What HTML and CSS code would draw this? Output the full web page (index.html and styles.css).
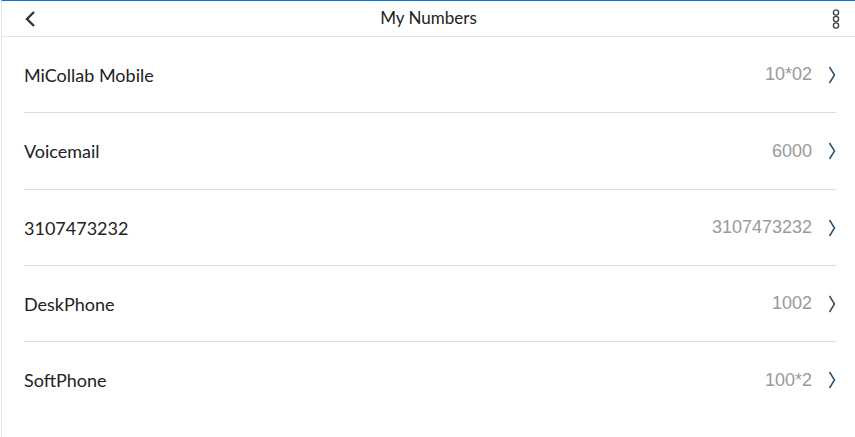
FILE: index.html
```html
<!DOCTYPE html>
<html>
<head>
    <meta charset="UTF-8">
    <title>My Numbers</title>
    <link rel="stylesheet" href="styles.css">
</head>
<body>
    <div class="page">
        <div class="header">
            <svg class="back" width="12" height="16" viewBox="0 0 12 16"><path d="M10 1 L3 8 L10 15" fill="none" stroke="#333" stroke-width="2.4"/></svg>
            <div class="title">My Numbers</div>
            <svg class="more" width="10" height="20" viewBox="0 0 10 20"><circle cx="5" cy="3.5" r="2.6" fill="none" stroke="#444" stroke-width="1.4"/><circle cx="5" cy="10" r="2.6" fill="none" stroke="#444" stroke-width="1.4"/><circle cx="5" cy="16.5" r="2.6" fill="none" stroke="#444" stroke-width="1.4"/></svg>
        </div>
        <ul class="list">
            <li class="row"><span class="label">MiCollab Mobile</span><span class="value">10*02</span><svg class="chev" width="8" height="18" viewBox="0 0 8 18"><path d="M1.5 1 L6.5 9 L1.5 17" fill="none" stroke="#2b4f70" stroke-width="1.5"/></svg></li>
            <li class="row"><span class="label">Voicemail</span><span class="value">6000</span><svg class="chev" width="8" height="18" viewBox="0 0 8 18"><path d="M1.5 1 L6.5 9 L1.5 17" fill="none" stroke="#2b4f70" stroke-width="1.5"/></svg></li>
            <li class="row"><span class="label">3107473232</span><span class="value">3107473232</span><svg class="chev" width="8" height="18" viewBox="0 0 8 18"><path d="M1.5 1 L6.5 9 L1.5 17" fill="none" stroke="#2b4f70" stroke-width="1.5"/></svg></li>
            <li class="row"><span class="label">DeskPhone</span><span class="value">1002</span><svg class="chev" width="8" height="18" viewBox="0 0 8 18"><path d="M1.5 1 L6.5 9 L1.5 17" fill="none" stroke="#2b4f70" stroke-width="1.5"/></svg></li>
            <li class="row"><span class="label">SoftPhone</span><span class="value">100*2</span><svg class="chev" width="8" height="18" viewBox="0 0 8 18"><path d="M1.5 1 L6.5 9 L1.5 17" fill="none" stroke="#2b4f70" stroke-width="1.5"/></svg></li>
        </ul>
    </div>
</body>
</html>
```

FILE: styles.css
```css
*{padding:0;margin:0;box-sizing:border-box}
body{background:#fff;font-family:Lato,"Liberation Sans",sans-serif;color:#222}
.page{height:437px;border-top:1px solid #0b73d0;border-left:1px solid #e4e4e4;margin-left:1px;overflow:hidden}
.header{height:36px;border-bottom:1px solid #e2e4e6;display:flex;align-items:center;position:relative;padding:0 14px 0 22px}
.back{display:block}
.title{position:absolute;left:0;right:0;text-align:center;font-size:17px;color:#222;top:6px}
.more{margin-left:auto;display:block}
.list{list-style:none;padding:0 19px 0 22px}
.row{height:76px;display:flex;align-items:center;border-bottom:1px solid #dddddd}
.row:nth-child(2){height:77px}
.row:last-child{border-bottom:none}
.label{font-size:18px;color:#222}
.value{margin-left:auto;font-family:"Liberation Sans",Arial,sans-serif;font-size:18px;color:#9a9a9a}
.chev{margin-left:16px;margin-right:0;display:block}
```
